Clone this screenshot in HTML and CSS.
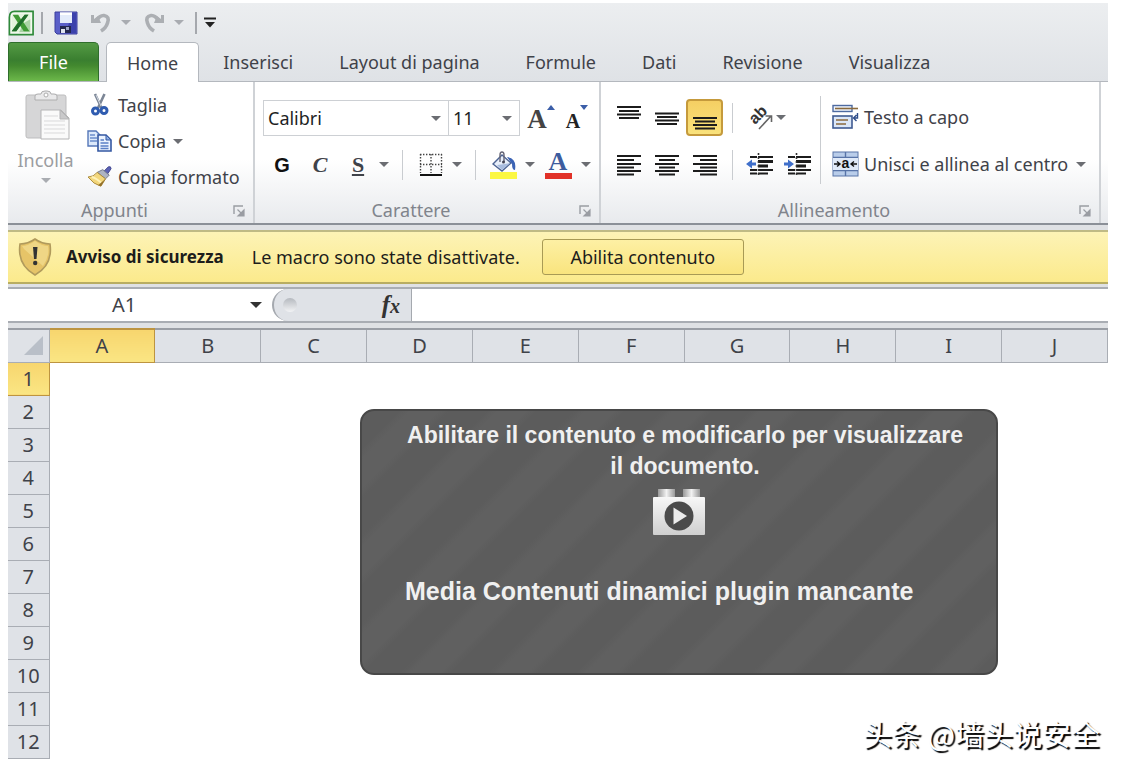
FILE: index.html
```html
<!DOCTYPE html>
<html lang="it">
<head>
<meta charset="utf-8">
<title>Foglio di calcolo</title>
<link rel="stylesheet" href="styles.css">
</head>
<body>
<main class="window">
  <header class="chrome">
    <div class="quick-bar">
      <svg class="app-icon" width="26" height="26" viewBox="0 0 28 28" aria-hidden="true">
        <path d="M7 1.500H27.000V26.500H1.500V8Q1.500 1.500 7 1.500Z" fill="#f4faf1" stroke="#2f8a3a" stroke-width="1.800"/>
        <path d="M4 24V8Q4 4 8 4H24V24Z" fill="#e3f3dd"/>
        <path d="M17 14L24 10V24H12Z" fill="#a9d3a4"/>
        <path d="M5 5H11L14 10L18 5H22L16.500 13L23 23H17L13 17L9 23H4L10.500 13.500Z" fill="#3f9a35"/>
        <path d="M18 5H22L9 23H4Z" fill="#1f6d2b"/>
      </svg>
      <span class="quick-sep"></span>
      <button class="quick save" aria-label="Salva">
        <svg width="24" height="24" viewBox="0 0 24 24"><path d="M1 1H23V23H3L1 21Z" fill="#5a5fc8" stroke="#3a3f9c"/><path d="M18 2H22V22H12Z" fill="#3c42ac"/><path d="M6 1.500H18V12H6Z" fill="#e4ecfb"/><path d="M6 1.500H18V4H6Z" fill="#fff"/><path d="M6 15H17V22H6Z" fill="#23284f"/><path d="M7 18H11V22H7Z" fill="#dfe3ef"/><path d="M12 16H15V19H12Z" fill="#9ca4c4"/></svg>
      </button>
      <button class="quick undo" aria-label="Annulla">
        <svg width="22" height="20" viewBox="0 0 22 20"><path d="M1 2H4V6L8 3L11 10H1Z" fill="#acafb3"/><path d="M6 8Q10 2 14 2.500Q20 3.500 17.500 10Q16 15 11 18" fill="none" stroke="#acafb3" stroke-width="3.600"/></svg>
      </button>
      <span class="caret pale"></span>
      <button class="quick redo" aria-label="Ripeti">
        <svg width="22" height="20" viewBox="0 0 22 20"><path d="M21 2H18V6L14 3L11 10H21Z" fill="#acafb3"/><path d="M16 8Q12 2 8 2.500Q2 3.500 4.500 10Q6 15 11 18" fill="none" stroke="#acafb3" stroke-width="3.600"/></svg>
      </button>
      <span class="caret pale"></span>
      <span class="quick-sep end"></span>
      <button class="quick more" aria-label="Personalizza">
        <svg width="12" height="12" viewBox="0 0 12 12"><path d="M0 1.500H12" stroke="#222" stroke-width="2"/><path d="M1 5H11L6 10.500Z" fill="#222"/></svg>
      </button>
    </div>
    <nav class="tabs">
      <button class="tab file">File</button>
      <button class="tab active">Home</button>
      <button class="tab">Inserisci</button>
      <button class="tab">Layout di pagina</button>
      <button class="tab">Formule</button>
      <button class="tab">Dati</button>
      <button class="tab">Revisione</button>
      <button class="tab">Visualizza</button>
    </nav>
  </header>

  <section class="ribbon">
    <div class="group clipboard">
      <div class="group-body">
        <button class="paste" disabled>
          <svg width="46" height="52" viewBox="0 0 46 52"><rect x="1" y="5" width="40" height="43" rx="2" fill="#d6d6d7" stroke="#bdbdbe"/><path d="M10 10V6Q10 4 13 4H16Q16 1 20 1H22Q26 1 26 4H29Q32 4 32 6V10Z" fill="#e9e9ea" stroke="#adadae"/><circle cx="21" cy="5" r="2" fill="#fff" stroke="#adadae"/><path d="M16 20H36L44 28V49H16Z" fill="#fafafa" stroke="#b5b5b6"/><path d="M35 20V29H44Z" fill="#c9c9ca" stroke="#b5b5b6"/><path d="M19 26H33M19 31H40M19 35H40M19 39H40M19 43H40" stroke="#d9d9da"/></svg>
          <span>Incolla</span>
          <span class="caret pale"></span>
        </button>
        <div class="command-list">
          <button class="command">
            <svg width="26" height="24" viewBox="0 0 26 24"><path d="M8 1L14.500 15M17.500 1L11 15" stroke="#7c8696" stroke-width="2.600"/><path d="M9 2L14 13" stroke="#d4dae3"/><circle cx="8.500" cy="18" r="3" fill="#fff" stroke="#2f5cb0" stroke-width="3"/><circle cx="17" cy="17.500" r="3" fill="#fff" stroke="#2f5cb0" stroke-width="3"/></svg>
            <span>Taglia</span>
          </button>
          <button class="command">
            <svg width="26" height="24" viewBox="0 0 26 24"><path d="M1 2H9L13 6V17H1Z" fill="#dce9fb" stroke="#5577b8" stroke-width="1.400"/><path d="M3 6H8M3 9H10M3 12H10" stroke="#6b8dcb" stroke-width="1.400"/><path d="M11 6H19L24 11V22H11Z" fill="#eaf2fe" stroke="#3558a2" stroke-width="1.600"/><path d="M19 6V11H24Z" fill="#8fb0e6" stroke="#3558a2"/><path d="M13.500 11H17M13.500 14H21.500M13.500 17H21.500M13.500 19.500H21.500" stroke="#5b80c6" stroke-width="1.400"/></svg>
            <span>Copia</span><span class="caret"></span>
          </button>
          <button class="command">
            <svg width="26" height="24" viewBox="0 0 28 26"><path d="M18 7L23 2Q26 1 26 4L22 10Z" fill="#5b62b4" stroke="#41478f"/><path d="M11 8L17 5L24 11L20 15Z" fill="#aeb4c2" stroke="#6f7587"/><path d="M11 8L20 15L15 23Q7 21 1 13Q7 13 11 8Z" fill="#f3d77c" stroke="#a98836"/><path d="M5 13Q10 14 16 20" stroke="#fff2b8" stroke-width="2" fill="none"/><path d="M20 15L15 23L12 22Z" fill="#93702a"/></svg>
            <span>Copia formato</span>
          </button>
        </div>
      </div>
      <footer class="group-label"><span>Appunti</span><button class="launcher" aria-label="Appunti"><svg width="12" height="12" viewBox="0 0 12 12"><path d="M1 9V1H10" fill="none" stroke="#9a9da3" stroke-width="1.400"/><path d="M4.500 4.500L9 9M11 5V11H5Z" fill="#9a9da3" stroke="#9a9da3" stroke-width="1.200"/></svg></button></footer>
    </div>

    <div class="group font">
      <div class="group-body stack">
        <div class="tool-row">
          <label class="combo family"><select aria-label="Tipo di carattere"><option>Calibri</option></select><span class="caret"></span></label>
          <label class="combo size"><select aria-label="Dimensione"><option>11</option></select><span class="caret"></span></label>
          <button class="tool grow" aria-label="Aumenta carattere"><span class="letter big">A</span><svg width="8" height="5" viewBox="0 0 8 5"><path d="M0 5L4 0L8 5Z" fill="#3b5ea8"/></svg></button>
          <button class="tool grow" aria-label="Riduci carattere"><span class="letter small">A</span><svg width="8" height="5" viewBox="0 0 8 5"><path d="M0 0H8L4 5Z" fill="#3b5ea8"/></svg></button>
        </div>
        <div class="tool-row">
          <button class="tool bold">G</button>
          <button class="tool italic">C</button>
          <button class="tool underline">S</button>
          <button class="tool drop" aria-label="Sottolineatura"><span class="caret"></span></button>
          <span class="tool-sep"></span>
          <button class="tool" aria-label="Bordi"><svg width="24" height="24" viewBox="0 0 24 24"><path d="M1 1.500H23M1 11.500H23" stroke="#444" stroke-width="1.400" stroke-dasharray="1.400 1.600"/><path d="M1.500 1V20M12 1V20M22.500 1V20" stroke="#444" stroke-width="1.400" stroke-dasharray="1.400 1.600"/><path d="M1 22H23" stroke="#111" stroke-width="2"/></svg></button>
          <button class="tool drop" aria-label="Scegli bordo"><span class="caret"></span></button>
          <span class="tool-sep"></span>
          <button class="tool" aria-label="Colore riempimento"><svg width="28" height="28" viewBox="0 0 28 28"><path d="M0 21H27V28H0Z" fill="#fbf742"/><path d="M3 13L12 4L21 12L12 20Z" fill="#e8effa" stroke="#4d6494" stroke-width="1.400"/><path d="M7 14L12 19L20 12L15 13Z" fill="#a9bddf"/><path d="M10 11V4Q10 1 12 1Q14 1 14 4V11" fill="none" stroke="#667" stroke-width="1.400"/><circle cx="13.500" cy="11" r="1.500" fill="#445"/><path d="M17 6Q27 7 25 19Q22 19 22 13Z" fill="#3b63b4"/></svg></button>
          <button class="tool drop" aria-label="Scegli riempimento"><span class="caret"></span></button>
          <button class="tool font-color" aria-label="Colore carattere"><span>A</span></button>
          <button class="tool drop" aria-label="Scegli colore"><span class="caret"></span></button>
        </div>
      </div>
      <footer class="group-label"><span>Carattere</span><button class="launcher" aria-label="Carattere"><svg width="12" height="12" viewBox="0 0 12 12"><path d="M1 9V1H10" fill="none" stroke="#9a9da3" stroke-width="1.400"/><path d="M4.500 4.500L9 9M11 5V11H5Z" fill="#9a9da3" stroke="#9a9da3" stroke-width="1.200"/></svg></button></footer>
    </div>

    <div class="group align">
      <div class="group-body">
        <div class="align-grid">
          <button class="tool" aria-label="Allinea in alto"><svg width="24" height="24" viewBox="0 0 24 24"><path d="M0 1H24M2 5H22M0 8.500H24M2 12H22" stroke="#1c1c1c" stroke-width="1.800"/></svg></button>
          <button class="tool" aria-label="Allinea al centro"><svg width="24" height="24" viewBox="0 0 24 24"><path d="M0 7.500H24M2 11H22M0 14.500H24M2 18H22" stroke="#1c1c1c" stroke-width="1.800"/></svg></button>
          <button class="tool pressed" aria-label="Allinea in basso"><svg width="24" height="24" viewBox="0 0 24 24"><path d="M0 12H24M2 15.500H22M0 19H24M2 22.500H22" stroke="#1c1c1c" stroke-width="1.800"/></svg></button>
          <span class="tool-sep"></span>
          <button class="tool orient" aria-label="Orientamento"><svg width="28" height="28" viewBox="0 0 28 28"><text x="8" y="21" transform="rotate(-45 8 21)" class="ab">ab</text><path d="M12 25L24 12M18.500 12H24.500V18" fill="none" stroke="#666" stroke-width="1.600"/></svg><span class="caret"></span></button>
          <button class="tool" aria-label="Allinea a sinistra"><svg width="24" height="22" viewBox="0 0 24 22"><path d="M0 2H24M0 6H17M0 10H24M0 13.500H17M0 17H24M0 20.500H17" stroke="#1c1c1c" stroke-width="1.800"/></svg></button>
          <button class="tool" aria-label="Centra"><svg width="24" height="22" viewBox="0 0 24 22"><path d="M0 2H24M4 6H20M0 10H24M4 13.500H20M0 17H24M4 20.500H20" stroke="#1c1c1c" stroke-width="1.800"/></svg></button>
          <button class="tool" aria-label="Allinea a destra"><svg width="24" height="22" viewBox="0 0 24 22"><path d="M0 2H24M7 6H24M0 10H24M7 13.500H24M0 17H24M7 20.500H24" stroke="#1c1c1c" stroke-width="1.800"/></svg></button>
          <span class="tool-sep"></span>
          <div class="indents">
            <button class="tool" aria-label="Riduci rientro"><svg width="28" height="26" viewBox="0 0 28 26"><path d="M4 5H11M12 5H27M4 18H11M12 18H27M4 21.500H11M12 21.500H22" stroke="#1c1c1c" stroke-width="1.800"/><path d="M12 9.500H27M12 14H22" stroke="#1c1c1c" stroke-width="3"/><path d="M12.500 1V25" stroke="#333" stroke-width="1.600" stroke-dasharray="2 2"/><path d="M0 12L6 7.500V10.500H10V13.500H6V16.500Z" fill="#3f6fca"/></svg></button>
            <button class="tool" aria-label="Aumenta rientro"><svg width="28" height="26" viewBox="0 0 28 26"><path d="M4 5H11M12 5H27M4 18H11M12 18H27M4 21.500H11M12 21.500H22" stroke="#1c1c1c" stroke-width="1.800"/><path d="M12 9.500H27M12 14H22" stroke="#1c1c1c" stroke-width="3"/><path d="M12.500 1V25" stroke="#333" stroke-width="1.600" stroke-dasharray="2 2"/><path d="M10 12L4 7.500V10.500H0V13.500H4V16.500Z" fill="#3f6fca"/></svg></button>
          </div>
        </div>
        <span class="tall-sep"></span>
        <div class="text-tools">
          <button class="command">
            <svg width="28" height="26" viewBox="0 0 28 26"><rect x="1" y="1.500" width="19" height="6" fill="#eef4fd" stroke="#4d6aa0" stroke-width="1.400"/><path d="M3 4.500H26" stroke="#8a6a3c" stroke-width="1.600"/><rect x="1" y="12" width="19" height="12" fill="#dbe7f8" stroke="#3f5b91" stroke-width="1.600"/><path d="M4 16H16M4 20H14" stroke="#8a6a3c" stroke-width="1.600"/><path d="M25.500 9V14H22M24.500 11L21.500 14L24.500 17" fill="none" stroke="#2f4e8a" stroke-width="1.400"/></svg>
            <span>Testo a capo</span>
          </button>
          <button class="command">
            <svg width="28" height="26" viewBox="0 0 28 26"><rect x="1" y="1" width="25" height="24" fill="#b9cdea" stroke="#5874a8"/><path d="M1 6.500H26M1 19.500H26M13.500 1V6M13.500 20V25" stroke="#5874a8" stroke-width="1.400"/><rect x="1" y="7" width="25" height="12" fill="#dfe9f8"/><text x="13.500" y="17" text-anchor="middle" class="merge-a">a</text><path d="M2 13H8M5 10.500L8 13L5 15.500M25 13H19M22 10.500L19 13L22 15.500" fill="none" stroke="#111" stroke-width="1.400"/></svg>
            <span>Unisci e allinea al centro</span><span class="caret"></span>
          </button>
        </div>
      </div>
      <footer class="group-label"><span>Allineamento</span><button class="launcher" aria-label="Allineamento"><svg width="12" height="12" viewBox="0 0 12 12"><path d="M1 9V1H10" fill="none" stroke="#9a9da3" stroke-width="1.400"/><path d="M4.500 4.500L9 9M11 5V11H5Z" fill="#9a9da3" stroke="#9a9da3" stroke-width="1.200"/></svg></button></footer>
    </div>
  </section>

  <section class="notice">
    <svg width="34" height="38" viewBox="0 0 34 38" aria-hidden="true"><path d="M17 1Q24 6 32 6Q35 27 17 37Q-1 27 2 6Q10 6 17 1Z" fill="#e6c468" stroke="#b09a5c" stroke-width="1.600"/><path d="M17 3Q24 8 30 8Q32 18 25 28L6 11L4 8Q10 8 17 3Z" fill="#efd685"/><path d="M15 9H19.500L18.500 21H16Z" fill="#333"/><circle cx="17.200" cy="25" r="2.200" fill="#333"/></svg>
    <strong>Avviso di sicurezza</strong>
    <span class="notice-text">Le macro sono state disattivate.</span>
    <button class="enable">Abilita contenuto</button>
  </section>

  <section class="formula-bar">
    <input class="name-box" aria-label="Casella nome" value="A1">
    <button class="name-drop" aria-label="Apri elenco nomi"><span class="caret dark"></span></button>
    <div class="fx-pad"><span class="knob"></span><button class="fx" aria-label="Inserisci funzione">f<span>x</span></button></div>
    <input class="formula" aria-label="Formula">
  </section>

  <section class="sheet">
    <table class="grid">
      <thead>
        <tr><th class="corner"><svg width="20" height="19" viewBox="0 0 20 19"><path d="M20 0V19H1Z" fill="#b9bfc8"/></svg></th><th class="on">A</th><th>B</th><th>C</th><th>D</th><th>E</th><th>F</th><th>G</th><th>H</th><th>I</th><th>J</th></tr>
      </thead>
      <tbody>
        <tr><th class="on">1</th><td colspan="10"></td></tr>
        <tr><th>2</th><td colspan="10"></td></tr>
        <tr><th>3</th><td colspan="10"></td></tr>
        <tr><th>4</th><td colspan="10"></td></tr>
        <tr><th>5</th><td colspan="10"></td></tr>
        <tr><th>6</th><td colspan="10"></td></tr>
        <tr><th>7</th><td colspan="10"></td></tr>
        <tr><th>8</th><td colspan="10"></td></tr>
        <tr><th>9</th><td colspan="10"></td></tr>
        <tr><th>10</th><td colspan="10"></td></tr>
        <tr><th>11</th><td colspan="10"></td></tr>
        <tr><th>12</th><td colspan="10"></td></tr>
      </tbody>
    </table>
    <div class="media-card">
      <p class="card-lead">Abilitare il contenuto e modificarlo per visualizzare il documento.</p>
      <svg width="54" height="48" viewBox="0 0 54 48" aria-hidden="true"><defs><linearGradient id="stud" x1="0" x2="1" y1="0" y2="0"><stop offset="0" stop-color="#999"/><stop offset=".5" stop-color="#f2f2f2"/><stop offset="1" stop-color="#999"/></linearGradient><linearGradient id="brick" x1="0" x2="0" y1="0" y2="1"><stop offset="0" stop-color="#f7f7f7"/><stop offset="1" stop-color="#cfcfcf"/></linearGradient></defs><rect x="6" y="1" width="17" height="9" fill="url(#stud)"/><rect x="31" y="1" width="17" height="9" fill="url(#stud)"/><rect x="1" y="9" width="52" height="38" rx="1" fill="url(#brick)"/><circle cx="27" cy="28" r="14.500" fill="#4b4b4b"/><path d="M21.500 19.500L35 28L21.500 36.500Z" fill="#ececec"/></svg>
      <p class="card-sub">Media Contenuti dinamici plugin mancante</p>
    </div>
    <p class="watermark">头条 @墙头说安全</p>
  </section>
</main>
</body>
</html>
```

FILE: styles.css
```css
* { box-sizing: border-box; }
body {
  margin: 0;
  padding: 3px 14px 8px 8px;
  background: #fff;
  color: #3f4249;
  font-family: "Noto Sans", "Open Sans", sans-serif;
  font-size: 18px;
  line-height: 24px;
}
button, input, select {
  margin: 0;
  padding: 0;
  border: 0;
  background: none;
  color: inherit;
  font: inherit;
}
svg { display: block; flex: none; }
p { margin: 0; }

.caret {
  flex: none;
  width: 0;
  height: 0;
  border: 5px solid transparent;
  border-top-color: #6b6d72;
  border-bottom: 0;
}
.caret.pale { border-top-color: #a9acb1; }
.caret.dark { border-width: 6px 6px 0; border-top-color: #333; }

/* title bar and tabs */
.chrome { background: linear-gradient(#eceef0, #dfe2e6); border-bottom: 1px solid #b4b8be; }
.quick-bar { display: flex; align-items: center; height: 39px; }
.quick-sep { width: 2px; height: 22px; margin: 0 11px 0 7px; background: #a5a8ad; }
.quick-sep.end { margin: 0 7px 0 11px; }
.undo { margin: 0 9px 0 12px; }
.redo { margin: 0 9px 0 12px; }
.tabs { display: flex; gap: 2px; height: 39px; }
.tab { padding: 0 22px; white-space: nowrap; }
.tab.file {
  width: 91px;
  margin-right: 5px;
  border: 1px solid #2f6e2c;
  border-bottom: 0;
  border-radius: 3px 5px 0 0;
  background: linear-gradient(#549a44, #3a7f30 45%, #43892f 60%, #6cb84a);
  color: #fff;
}
.tab.active {
  margin-bottom: -1px;
  padding: 0 20px;
  border: 1px solid #b4b8be;
  border-bottom: 0;
  border-radius: 5px 5px 0 0;
  background: #fff;
}

/* ribbon */
.ribbon {
  display: flex;
  height: 143px;
  border-bottom: 2px solid #8b9097;
  background: linear-gradient(#fff 55%, #e8eaed);
}
.group { display: flex; flex-direction: column; border-right: 2px solid #cfd2d6; }
.clipboard { width: 247px; }
.font { width: 346px; }
.align { flex: 1; margin-right: 7px; }
.group-body { display: flex; flex: 1; }
.group-body.stack { flex-direction: column; gap: 10px; padding: 17px 0 0 8px; }
.group-label { position: relative; height: 25px; text-align: center; color: #80848c; }
.group-label span { padding-right: 32px; }
.launcher { position: absolute; right: 8px; top: 7px; }
.paste { display: flex; flex-direction: column; align-items: center; width: 75px; padding-top: 8px; color: #9b9da1; }
.paste span:first-of-type { margin: 6px 0; }
.paste svg { margin-left: 4px; }
.command-list { display: flex; flex-direction: column; padding: 5px 0 0 4px; }
.command { display: flex; align-items: center; gap: 5px; height: 36px; white-space: nowrap; }
.command .caret { margin-left: 2px; }
.tool-row { display: flex; align-items: center; height: 37px; }
.combo { position: relative; height: 36px; border: 1px solid #cdd0d4; background: #fff; }
.combo.family { width: 186px; }
.combo.size { width: 72px; margin-left: -1px; }
.combo select { width: 100%; height: 100%; padding-left: 4px; appearance: none; color: #1d1f24; }
.combo .caret { position: absolute; right: 7px; top: 15px; pointer-events: none; }
.tool { display: flex; align-items: center; justify-content: center; flex: none; width: 38px; height: 37px; }
.tool.drop { width: 14px; }
.letter { font-family: "Liberation Serif", serif; font-weight: bold; color: #444; }
.letter.big { font-size: 27px; padding-top: 2px; }
.letter.small { font-size: 20px; color: #222; padding-top: 4px; }
.grow { align-items: flex-start; padding: 6px 0 0 4px; }
.grow + .grow { width: 34px; }
.bold { font-weight: 900; font-family: "Liberation Sans", sans-serif; font-size: 20px; color: #111; }
.italic { font-family: "Liberation Serif", serif; font-style: italic; font-weight: bold; font-size: 22px; }
.underline { font-family: "Liberation Serif", serif; font-weight: bold; font-size: 22px; text-decoration: underline; }
.font-color { width: 42px; }
.font-color span {
  width: 27px;
  height: 28px;
  border-bottom: 6px solid #e13128;
  color: #3d5c9e;
  font: bold 26px/22px "Liberation Serif", serif;
}
.tool-sep { flex: none; width: 1px; height: 30px; margin: 0 9px 0 11px; background: #c9ccd0; }
.align-grid {
  display: grid;
  grid-template-columns: 38px 38px 38px 17px 74px;
  grid-template-rows: 37px 37px;
  row-gap: 10px;
  align-items: center;
  padding: 17px 0 0 9px;
}
.align-grid .tool-sep { margin: 0 auto; }
.tool.pressed { width: 37px; border: 2px solid #c59a3c; border-radius: 4px; background: linear-gradient(#f5cf63, #f9e27c); }
.orient { gap: 1px; width: 46px; margin-left: 2px; }
.ab { font: bold 16px "Liberation Sans", sans-serif; fill: #333; }
.merge-a { font: bold 14px "Liberation Sans", sans-serif; fill: #111; }
.indents { display: flex; }
.tall-sep { width: 1px; height: 88px; margin: 14px 11px 0 5px; background: #c9ccd0; }
.text-tools { display: flex; flex-direction: column; gap: 11px; padding-top: 17px; }
.text-tools .command { gap: 4px; }
.text-tools .caret { margin-left: 4px; }

/* security notice */
.notice {
  display: flex;
  align-items: center;
  height: 54px;
  margin-top: 5px;
  padding-left: 10px;
  border-top: 2px solid #bfba85;
  border-bottom: 2px solid #b8ad62;
  background: linear-gradient(#fdf3b6, #fbea8c);
  color: #1d1d1b;
  white-space: nowrap;
}
.notice strong { margin: 0 28px 0 14px; font-size: 17px; }
.enable {
  width: 202px;
  height: 36px;
  margin-left: 22px;
  border: 1px solid #a89a55;
  border-radius: 3px;
  background: linear-gradient(#fdf0a4, #f9e47e);
}
.ribbon, .notice, .formula-bar { box-shadow: 0 5px #dfe1e4; }

/* formula bar */
.formula-bar {
  display: flex;
  height: 36px;
  margin-top: 3px;
  border-top: 2px solid #a9adb3;
  border-bottom: 2px solid #a9adb3;
  position: relative;
  background: #fff;
}
.name-box { width: 232px; text-align: center; font-size: 20px; }
.name-drop { width: 32px; display: flex; align-items: center; justify-content: center; }
.fx-pad {
  display: flex;
  align-items: center;
  justify-content: space-between;
  width: 140px;
  padding: 0 11px 0 9px;
  border: 1px solid #a5a9af;
  border-width: 0 1px 0 2px;
  border-radius: 17px 0 0 17px;
  background: #dfe2e7;
}
.knob { width: 14px; height: 14px; border-radius: 50%; background: linear-gradient(#b5b9bf, #f2f3f5); }
.fx { font: italic bold 25px "Liberation Serif", serif; color: #333; }
.fx span { font-size: 20px; }
.formula { flex: 1; min-width: 0; padding: 0 8px; }

/* sheet */
.sheet { position: relative; margin-top: 5px; }
.grid { width: 100%; table-layout: fixed; border-collapse: collapse; background: #fff; }
.grid tr { height: 33px; }
.grid th {
  padding: 0;
  border: 1px solid #a9adb4;
  border-left: 0;
  background: #dfe2e7;
  font-size: 20px;
  font-weight: normal;
}
.grid thead th { border-top: 2px solid #9a9ea5; }
.grid .corner { width: 41px; }
.corner svg { margin-left: 15px; }
.grid th.on { border-color: #bd9440; background: linear-gradient(#f7d56e, #fae583); }
.grid td { padding: 0; }

.media-card {
  position: absolute;
  top: 81px;
  left: 32%;
  width: 58%;
  height: 266px;
  padding: 9px 30px;
  display: flex;
  flex-direction: column;
  align-items: center;
  border: 2px solid #484848;
  border-radius: 14px;
  background: repeating-linear-gradient(135deg, #5c5c5c 0 26px, #606060 34px 54px, #5c5c5c 62px);
  color: #f0f0f0;
  font-family: "Liberation Sans", sans-serif;
  font-weight: bold;
  text-align: center;
}
.card-lead { padding-left: 12px; font-size: 23px; line-height: 31px; }
.media-card svg { margin: 6px 0 39px; }
.card-sub { align-self: flex-start; padding-left: 13px; font-size: 25px; line-height: 32px; white-space: nowrap; }
.watermark {
  position: absolute;
  right: 8px;
  bottom: 8px;
  color: #fff;
  font: 29px/36px "Noto Sans CJK SC", sans-serif;
  text-shadow: 2px 2px 1px #000;
}
```
